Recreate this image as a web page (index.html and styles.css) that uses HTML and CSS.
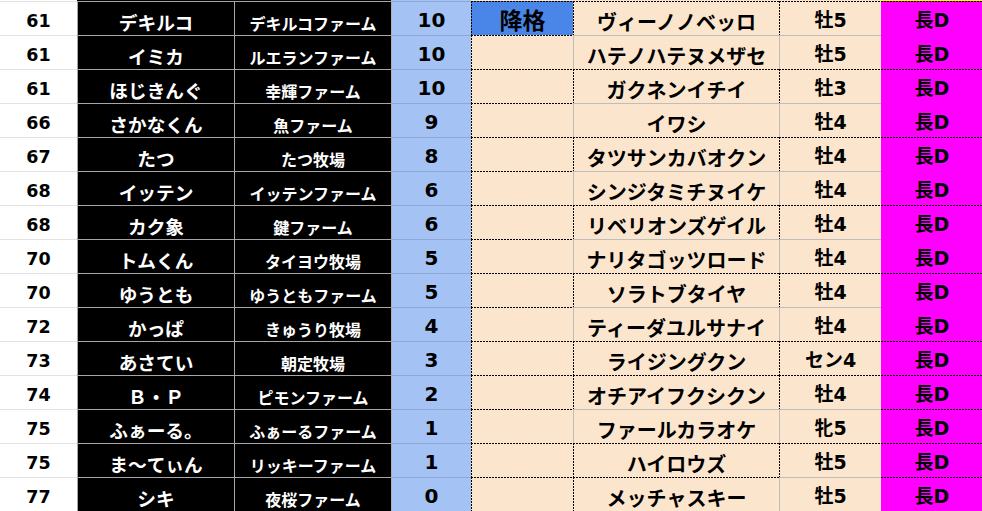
FILE: index.html
```html
<!DOCTYPE html>
<html lang="ja">
<head>
<meta charset="utf-8">
<title>Sheet</title>
<link rel="stylesheet" href="styles.css">
</head>
<body>
<div class="sheet">
  <div class="c rank stub"></div><div class="c owner stub"></div><div class="c farm stub"></div><div class="c pts stub"></div><div class="c note stub"></div><div class="c horse stub"></div><div class="c sex stub"></div><div class="c dist stub top-yellow"></div>

  <div class="c rank">61</div><div class="c owner">デキルコ</div><div class="c farm">デキルコファーム</div><div class="c pts">10</div><div class="c note demote dot">降格</div><div class="c horse dot">ヴィーノノベッロ</div><div class="c sex dot">牡5</div><div class="c dist dot">長D</div>
  <div class="c rank">61</div><div class="c owner">イミカ</div><div class="c farm">ルエランファーム</div><div class="c pts">10</div><div class="c note dot">&nbsp;</div><div class="c horse">ハテノハテヌメザセ</div><div class="c sex">牡5</div><div class="c dist">長D</div>
  <div class="c rank">61</div><div class="c owner">ほじきんぐ</div><div class="c farm">幸輝ファーム</div><div class="c pts">10</div><div class="c note dot">&nbsp;</div><div class="c horse dot">ガクネンイチイ</div><div class="c sex dot">牡3</div><div class="c dist dot">長D</div>
  <div class="c rank">66</div><div class="c owner">さかなくん</div><div class="c farm">魚ファーム</div><div class="c pts">9</div><div class="c note dot">&nbsp;</div><div class="c horse">イワシ</div><div class="c sex">牡4</div><div class="c dist">長D</div>
  <div class="c rank">67</div><div class="c owner">たつ</div><div class="c farm">たつ牧場</div><div class="c pts">8</div><div class="c note dot">&nbsp;</div><div class="c horse dot">タツサンカバオクン</div><div class="c sex dot">牡4</div><div class="c dist dot">長D</div>
  <div class="c rank">68</div><div class="c owner">イッテン</div><div class="c farm">イッテンファーム</div><div class="c pts">6</div><div class="c note dot">&nbsp;</div><div class="c horse">シンジタミチヌイケ</div><div class="c sex">牡4</div><div class="c dist">長D</div>
  <div class="c rank">68</div><div class="c owner">カク象</div><div class="c farm">鍵ファーム</div><div class="c pts">6</div><div class="c note dot">&nbsp;</div><div class="c horse dot">リベリオンズゲイル</div><div class="c sex dot">牡4</div><div class="c dist dot">長D</div>
  <div class="c rank">70</div><div class="c owner">トムくん</div><div class="c farm">タイヨウ牧場</div><div class="c pts">5</div><div class="c note dot">&nbsp;</div><div class="c horse">ナリタゴッツロード</div><div class="c sex">牡4</div><div class="c dist">長D</div>
  <div class="c rank">70</div><div class="c owner">ゆうとも</div><div class="c farm">ゆうともファーム</div><div class="c pts">5</div><div class="c note dot">&nbsp;</div><div class="c horse dot">ソラトブタイヤ</div><div class="c sex dot">牡4</div><div class="c dist dot">長D</div>
  <div class="c rank">72</div><div class="c owner">かっぱ</div><div class="c farm">きゅうり牧場</div><div class="c pts">4</div><div class="c note dot">&nbsp;</div><div class="c horse">ティーダユルサナイ</div><div class="c sex">牡4</div><div class="c dist">長D</div>
  <div class="c rank">73</div><div class="c owner">あさてい</div><div class="c farm">朝定牧場</div><div class="c pts">3</div><div class="c note dot">&nbsp;</div><div class="c horse dot">ライジングクン</div><div class="c sex dot">セン4</div><div class="c dist dot">長D</div>
  <div class="c rank">74</div><div class="c owner">Ｂ・Ｐ</div><div class="c farm">ピモンファーム</div><div class="c pts">2</div><div class="c note dot">&nbsp;</div><div class="c horse dot">オチアイフクシクン</div><div class="c sex dot">牡4</div><div class="c dist dot">長D</div>
  <div class="c rank">75</div><div class="c owner">ふぁーる。</div><div class="c farm">ふぁーるファーム</div><div class="c pts">1</div><div class="c note dot">&nbsp;</div><div class="c horse">ファールカラオケ</div><div class="c sex">牝5</div><div class="c dist dot">長D</div>
  <div class="c rank">75</div><div class="c owner">ま〜てぃん</div><div class="c farm">リッキーファーム</div><div class="c pts">1</div><div class="c note dot">&nbsp;</div><div class="c horse dot">ハイロウズ</div><div class="c sex dot">牡5</div><div class="c dist dot">長D</div>
  <div class="c rank">77</div><div class="c owner">シキ</div><div class="c farm">夜桜ファーム</div><div class="c pts">0</div><div class="c note dot">&nbsp;</div><div class="c horse dot">メッチャスキー</div><div class="c sex">牡5</div><div class="c dist dot">長D</div>
</div>
</body>
</html>
```

FILE: styles.css
```css
html, body {
  margin: 0;
  padding: 0;
  background: #ffffff;
  overflow: hidden;
}

.sheet {
  display: grid;
  grid-template-columns: 77px 157px 157px 80px 102px 206px 102px 101px;
  grid-template-rows: 1px repeat(15, 34px);
  width: 982px;
  font-family: "DejaVu Sans", "Noto Sans CJK JP", sans-serif;
  font-weight: 700;
  color: #000;
}

.c {
  box-sizing: border-box;
  display: flex;
  align-items: center;
  justify-content: center;
  padding-top: 5px;
  border-top: 1px solid #bdbdbd;
  border-left: 1px solid #bdbdbd;
  line-height: 1.15;
  white-space: nowrap;
}

.c.stub {
  border: 0;
  padding: 0;
  overflow: hidden;
}

.rank {
  border-left: 0;
  border-top-color: #e2e2e2;
  background: #ffffff;
  font-size: 17.5px;
  padding-top: 6px;
}

.owner, .farm {
  background: #000000;
  color: #ffffff;
  border-top-color: #a6a6a6;
  border-left-color: #a6a6a6;
  font-family: "Noto Sans CJK JP", sans-serif;
}

.owner { font-size: 18.7px; padding-top: 6px; }
.farm { font-size: 16px; padding-top: 9px; }

.pts {
  background: #a4c2f4;
  border-top-color: #8fa9d6;
  border-left-color: #b0b0b0;
  font-size: 20px;
  padding-top: 3px;
}

.note {
  background: #fce5cd;
}

.note.demote {
  background-color: #4a86e8;
  font-family: "Noto Sans CJK JP", sans-serif;
  font-size: 23px;
  padding-top: 2px;
}

.horse {
  background: #fce5cd;
  font-family: "Noto Sans CJK JP", sans-serif;
  font-size: 20px;
}

.sex {
  background: #fce5cd;
  font-size: 20px;
}

.dist {
  background: #ff00ff;
  border-left-color: #ff00ff;
  border-top-color: #ff00ff;
  font-size: 20px;
}

.sex, .dist {
  font-family: "DejaVu Sans", "Noto Sans CJK JP", sans-serif;
}

.sex, .dist {
  font-size: 19px;
}

/* dotted spreadsheet borders: 2px dash, 1px gap */
.dot {
  border-top-color: transparent;
  border-left-color: transparent;
  background-origin: border-box;
  background-clip: border-box;
  background-image:
    repeating-linear-gradient(to right, #000 0 2px, transparent 2px 3px),
    repeating-linear-gradient(to bottom, #000 0 2px, transparent 2px 3px);
  background-size: 100% 1px, 1px 100%;
  background-position: 0 0, 0 0;
  background-repeat: no-repeat;
}

.dist.dot {
  background-size: 100% 1px, 0 0;
}

.top-yellow {
  background: #ffff00;
}
```
